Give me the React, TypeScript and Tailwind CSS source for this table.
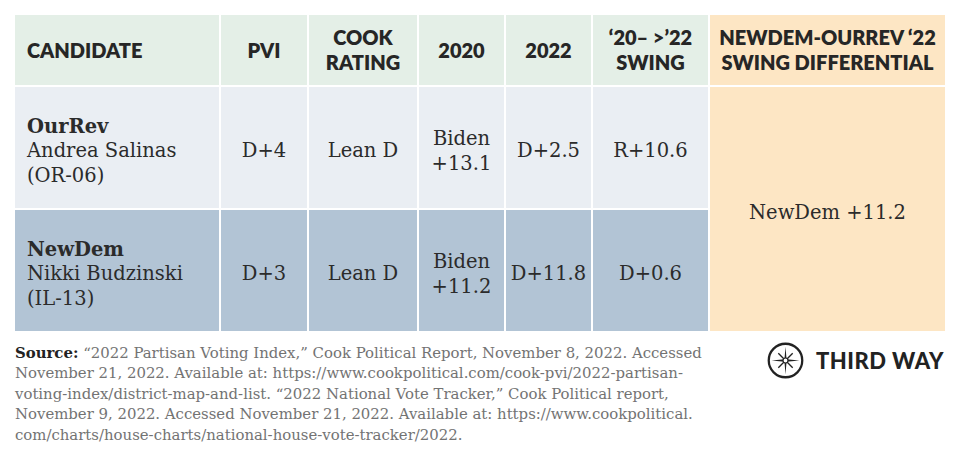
import React from "react";

function Compass() {
  return (
    <svg width="37" height="37" viewBox="0 0 36 36" className="shrink-0">
      <circle cx="18" cy="18" r="16.3" fill="none" stroke="#222" strokeWidth="2.2" />
      <path d="M18 4.5 L19 16.9 L31.5 18 L19 19.1 L18 31.5 L17 19.1 L4.5 18 L17 16.9 Z" fill="#222" />
      <path d="M11 11 L18 18 M25 11 L18 18 M11 25 L18 18 M25 25 L18 18" stroke="#222" strokeWidth="1.3" />
      <circle cx="18" cy="18" r="2.4" fill="#fff" stroke="#222" strokeWidth="1.1" />
    </svg>
  );
}

const rows = [
  {
    party: "OurRev",
    name: "Andrea Salinas",
    dist: "(OR-06)",
    pvi: "D+4",
    cook: "Lean D",
    y2020: ["Biden", "+13.1"],
    y2022: "D+2.5",
    swing: "R+10.6",
    bg: "bg-[#eaeef3]",
  },
  {
    party: "NewDem",
    name: "Nikki Budzinski",
    dist: "(IL-13)",
    pvi: "D+3",
    cook: "Lean D",
    y2020: ["Biden", "+11.2"],
    y2022: "D+11.8",
    swing: "D+0.6",
    bg: "bg-[#b2c4d5]",
  },
];

export default function App() {
  const head =
    "bg-[#e4efe7] flex items-center justify-center text-center font-['Lato','Open_Sans',sans-serif] text-[20px] leading-[25px] font-extrabold text-[#262626] uppercase";
  const cell =
    "flex items-center justify-center text-center pt-[8px] font-['DejaVu_Serif','Liberation_Serif',serif] text-[19.5px] leading-[24.5px] text-[#2b2b2b]";
  return (
    <div className="w-[960px] h-[458px] bg-white pt-[15px] px-[15px]">
      <div className="grid grid-cols-[204px_86px_108px_85px_85px_115px_235px] grid-rows-[70px_121px_121px] gap-[2px] bg-white">
        <div className={head + " !justify-start pl-[12px]"}>Candidate</div>
        <div className={head}>PVI</div>
        <div className={head}>Cook<br />Rating</div>
        <div className={head}>2020</div>
        <div className={head}>2022</div>
        <div className={head}>‘20– &gt;’22<br />Swing</div>
        <div className={head + " !bg-[#fde6c4]"}>NewDem-OurRev ‘22<br />Swing Differential</div>

        {rows.map((r, i) => (
          <React.Fragment key={r.party}>
            <div className={`${r.bg} ${cell} !items-start flex-col pl-[12px] !text-left`}>
              <span className="font-bold">{r.party}</span>
              <span>{r.name}</span>
              <span>{r.dist}</span>
            </div>
            <div className={`${r.bg} ${cell}`}>{r.pvi}</div>
            <div className={`${r.bg} ${cell}`}>{r.cook}</div>
            <div className={`${r.bg} ${cell}`}>{r.y2020[0]}<br />{r.y2020[1]}</div>
            <div className={`${r.bg} ${cell}`}>{r.y2022}</div>
            <div className={`${r.bg} ${cell}`}>{r.swing}</div>
            {i === 0 && <div className={`bg-[#fde6c4] row-span-2 ${cell}`}>NewDem +11.2</div>}
          </React.Fragment>
        ))}
      </div>

      <div className="flex justify-between mt-[12px]">
        <p className="font-['DejaVu_Serif','Liberation_Serif',serif] text-[14.9px] leading-[20.4px] text-[#737373] whitespace-nowrap">
          <span className="font-bold text-[#222]">Source:</span> “2022 Partisan Voting Index,” Cook Political Report, November 8, 2022. Accessed<br />
          November 21, 2022. Available at: https://www.cookpolitical.com/cook-pvi/2022-partisan-<br />
          voting-index/district-map-and-list. “2022 National Vote Tracker,” Cook Political report,<br />
          November 9, 2022. Accessed November 21, 2022. Available at: https://www.cookpolitical.<br />
          com/charts/house-charts/national-house-vote-tracker/2022.
        </p>
        <div className="flex items-center gap-[12px] self-start mr-[1px] -mt-[1px]">
          <Compass />
          <span className="font-['Lato','Open_Sans',sans-serif] text-[22px] font-black tracking-[0.5px] text-[#222]">THIRD WAY</span>
        </div>
      </div>
    </div>
  );
}
